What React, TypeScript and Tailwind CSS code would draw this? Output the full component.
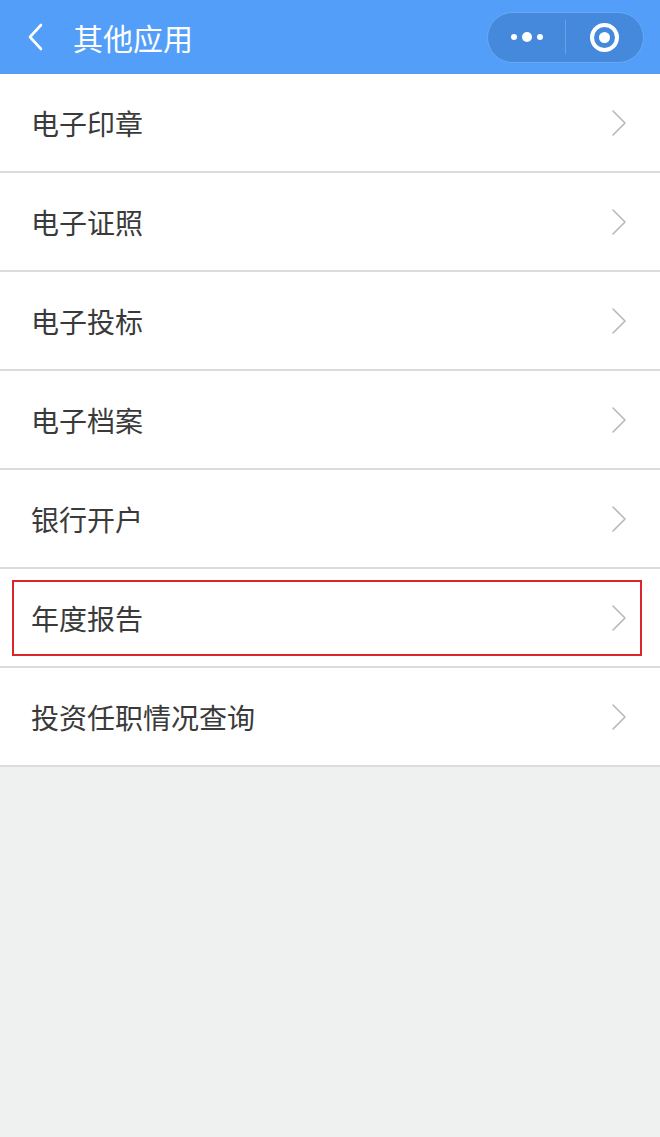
import { ReactNode } from "react"

const items = [
  "电子印章",
  "电子证照",
  "电子投标",
  "电子档案",
  "银行开户",
  "年度报告",
  "投资任职情况查询",
]

function Chevron() {
  return (
    <svg width="16" height="28" viewBox="0 0 16 28" fill="none" className="shrink-0">
      <path d="M2 2 L14 14 L2 26" stroke="#b8b8b8" strokeWidth="1.6" strokeLinecap="round" strokeLinejoin="round" />
    </svg>
  )
}

function Row({ label, highlight }: { label: string; highlight?: boolean }) {
  const inner: ReactNode = (
    <>
      <span className="text-[28px] leading-none text-[#3a3a3a]">{label}</span>
      <Chevron />
    </>
  )
  return (
    <div className="h-[99px] bg-white border-b-2 border-[#dcdcdc] flex items-center">
      {highlight ? (
        <div className="ml-[12px] mr-[18px] h-[76px] flex-1 border-2 border-[#d9262c] flex items-center justify-between pl-[17px] pr-[13px]">
          {inner}
        </div>
      ) : (
        <div className="flex-1 flex items-center justify-between pl-[31px] pr-[33px]">{inner}</div>
      )}
    </div>
  )
}

export default function App() {
  return (
    <div
      className="min-h-[1137px] bg-[#eff0f0]"
      style={{ fontFamily: '"Noto Sans CJK SC", "Noto Sans", sans-serif' }}
    >
      <div className="h-[74px] bg-[#529ef8] flex items-center justify-between pl-[26px] pr-[16px]">
        <div className="flex items-center">
          <svg width="18" height="28" viewBox="0 0 18 28" fill="none">
            <path d="M15 2 L4 14 L15 26" stroke="white" strokeWidth="2.6" strokeLinecap="round" strokeLinejoin="round" />
          </svg>
          <span className="ml-[29px] text-[30px] leading-none text-white">其他应用</span>
        </div>
        <div className="h-[51px] w-[157px] rounded-full bg-[#4589dd] border border-[#6aa9f4] flex items-center">
          <div className="flex-1 flex items-center justify-center gap-[5px]">
            <span className="w-[6px] h-[6px] rounded-full bg-white" />
            <span className="w-[10px] h-[10px] rounded-full bg-white" />
            <span className="w-[6px] h-[6px] rounded-full bg-white" />
          </div>
          <div className="w-px h-[34px] bg-[#6aa0e6]" />
          <div className="flex-1 flex items-center justify-center">
            <div className="w-[29px] h-[29px] rounded-full border-[4px] border-white flex items-center justify-center">
              <div className="w-[11px] h-[11px] rounded-full bg-white" />
            </div>
          </div>
        </div>
      </div>
      <div>
        {items.map((label) => (
          <Row key={label} label={label} highlight={label === "年度报告"} />
        ))}
      </div>
    </div>
  )
}
